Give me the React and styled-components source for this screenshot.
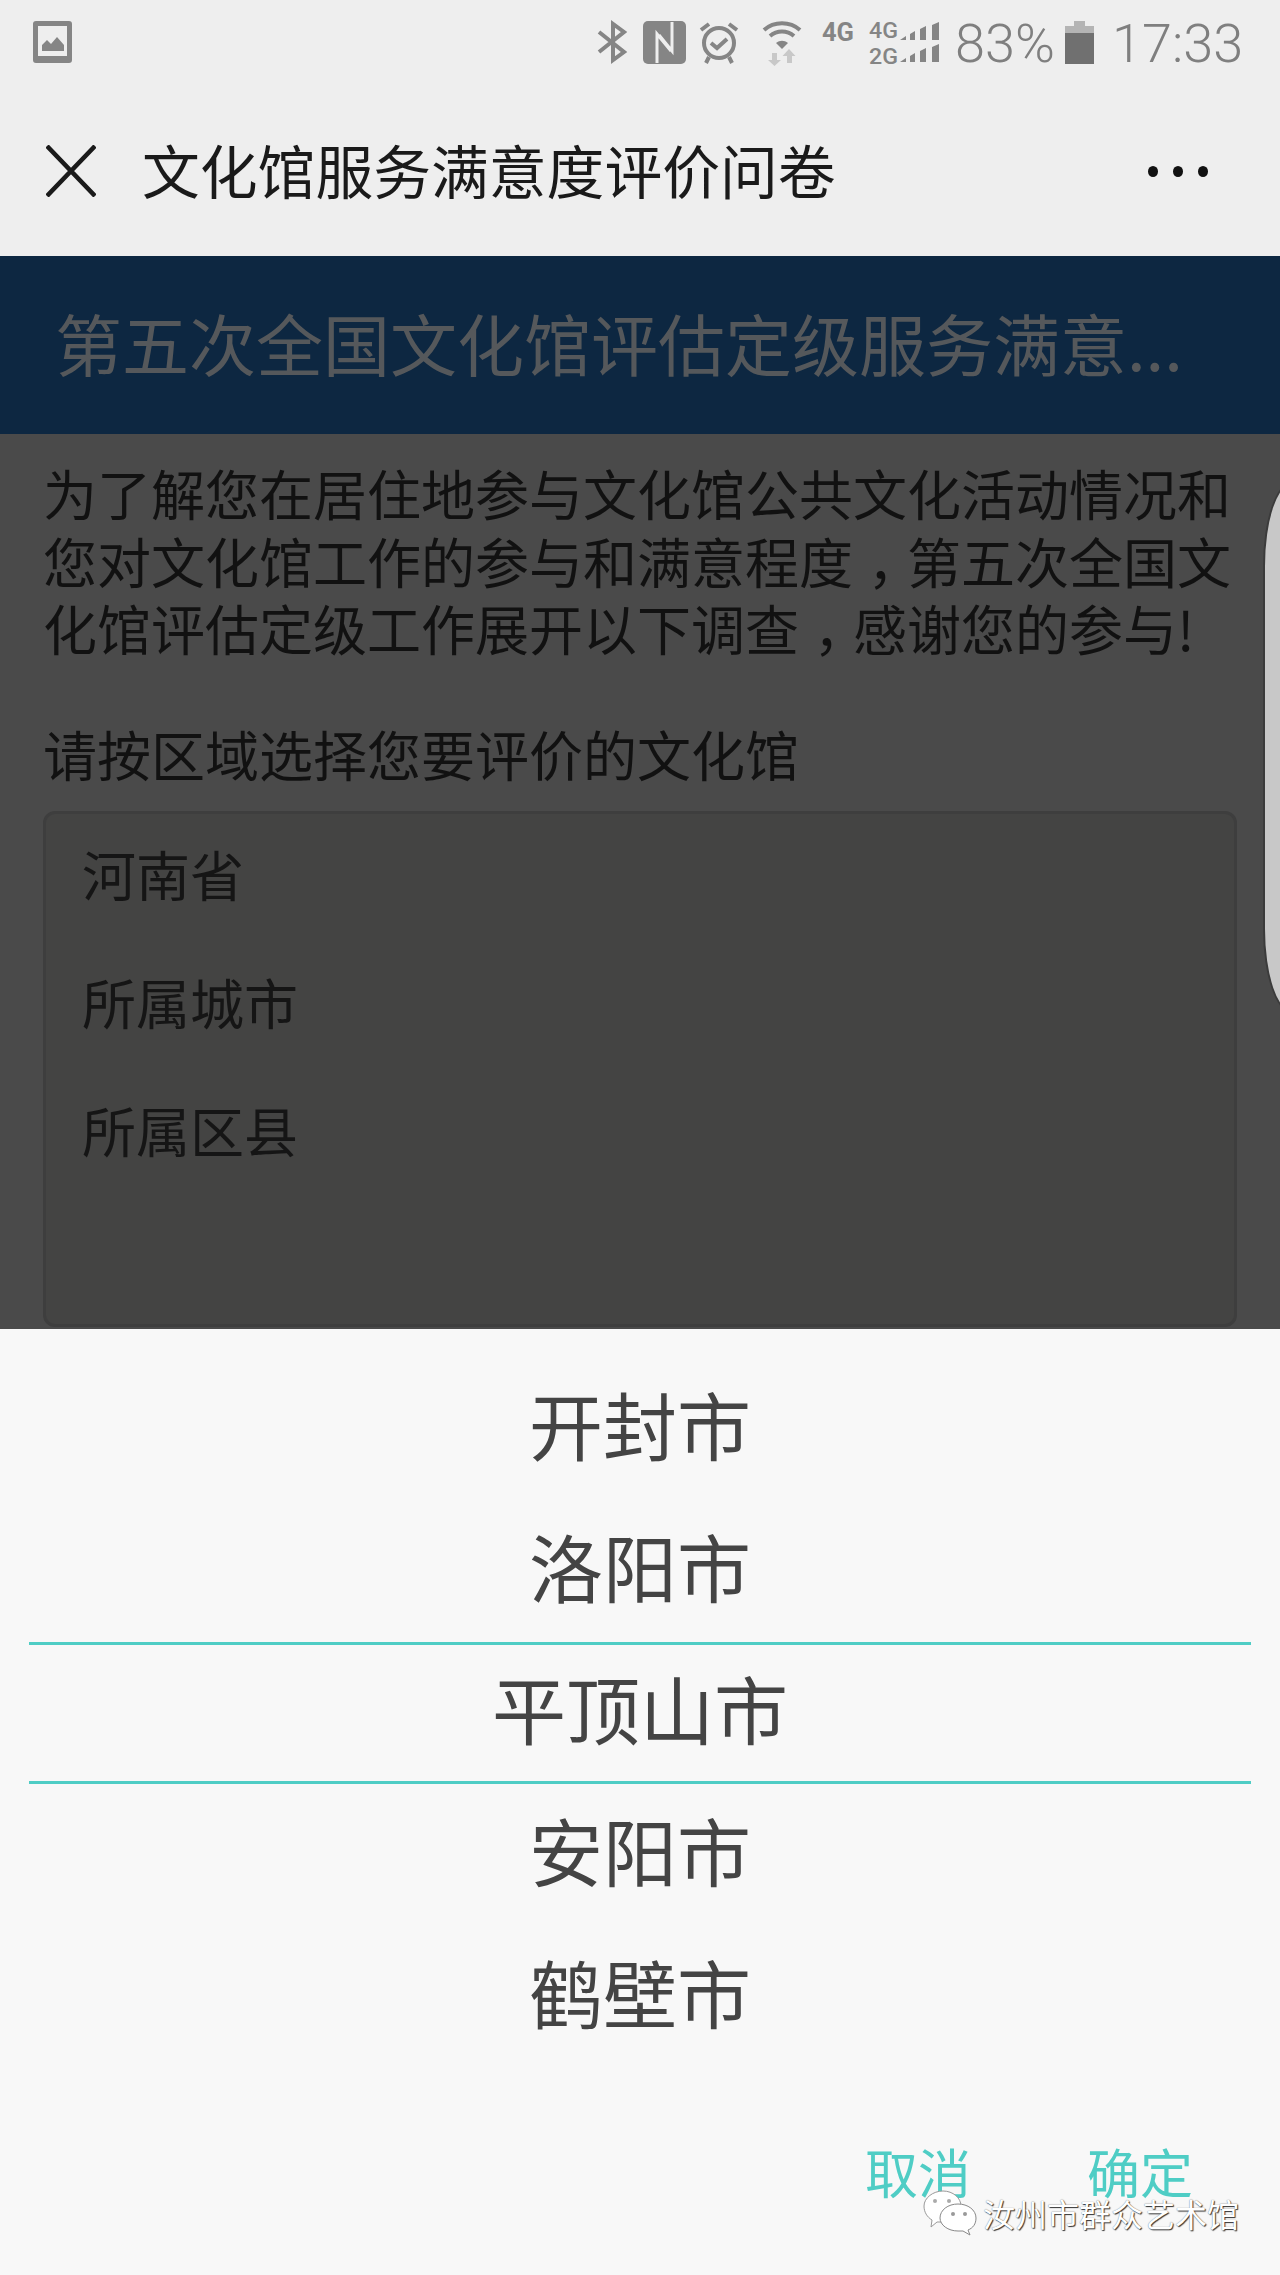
import React from 'react'
import styled, { createGlobalStyle } from 'styled-components'

const cjk = '"Noto Sans CJK SC", "Noto Sans", sans-serif'

const Global = createGlobalStyle`
  html, body { margin: 0; padding: 0; background: #f8f8f8; }
  * { box-sizing: border-box; }
`

const Page = styled.div`
  width: 1280px;
  height: 2275px;
  display: flex;
  flex-direction: column;
  overflow: hidden;
  font-family: ${cjk};
`

const Header = styled.div`
  height: 256px;
  background: #eeeeee;
  display: flex;
  flex-direction: column;
`

const StatusBar = styled.div`
  height: 86px;
  display: flex;
  align-items: flex-start;
  padding: 21px 37px 0 33px;
  color: #808080;
`

const StatusRight = styled.div`
  margin-left: auto;
  display: flex;
  align-items: flex-start;
`

const StatusIcon = styled.svg`
  display: block;
  flex: none;
  overflow: visible;
  margin-left: ${p => p.$gap || 0}px;
`

const StatusText = styled.span`
  margin-left: ${p => p.$gap}px;
  width: ${p => p.$width}px;
  padding-top: 1px;
  font-family: Roboto, sans-serif;
  font-weight: 300;
  font-size: 54px;
  line-height: 44px;
  white-space: nowrap;
  color: #7f7f7f;
`

const NavBar = styled.div`
  flex: 1;
  display: flex;
  align-items: center;
  padding: 0 72px 0 46px;
`

const NavTitle = styled.div`
  margin: 0 0 4px 46px;
  font-size: 57.8px;
  line-height: 64px;
  color: #1a1a1a;
  white-space: nowrap;
`

const Dots = styled.div`
  margin-left: auto;
  display: flex;
  gap: 15px;
`

const Dot = styled.i`
  width: 10px;
  height: 11px;
  border-radius: 50%;
  background: #111;
`

const Banner = styled.div`
  height: 178px;
  background: #0d2741;
  padding: 0 40px 6px 55px;
  display: flex;
  align-items: center;
`

const BannerTitle = styled.div`
  font-size: 67px;
  line-height: 88px;
  color: #55585b;
  white-space: nowrap;
`

const Content = styled.div`
  position: relative;
  height: 895px;
  background: #4a4a4a;
  padding: 25px 43px 0;
  overflow: hidden;
`

const Intro = styled.p`
  margin: 0;
  font-size: 54px;
  line-height: 67.5px;
  color: #111;
  width: 1192px;
`

// the reference font sets the full-width comma in the middle of its cell
const Comma = styled.span`
  padding-left: 0.27em;
  letter-spacing: -0.27em;
`

const FormLabel = styled.div`
  margin-top: 58px;
  font-size: 54px;
  line-height: 68px;
  color: #111;
`

const FormBox = styled.div`
  margin-top: 23px;
  height: 516px;
  background: #444443;
  border: 3px solid #3e3e3e;
  border-radius: 12px;
`

const FormRow = styled.div`
  height: 128px;
  padding: 0 0 9px 36px;
  display: flex;
  align-items: center;
  font-size: 54px;
  color: #151515;
`

const PeekCard = styled.div`
  position: absolute;
  top: 47px;
  left: 1263px;
  width: 80px;
  height: 533px;
  background: #c8c8c8;
  border: 2px solid #3b3b3b;
  border-radius: 30px / 85px;
`

const Sheet = styled.div`
  flex: 1;
  position: relative;
  background: #f8f8f8;
  display: flex;
  flex-direction: column;
`

const PickerList = styled.div`
  margin-top: 29px;
  display: flex;
  flex-direction: column;
`

const PickerItem = styled.div`
  margin: 0 29px;
  height: 142px;
  padding-bottom: 14px;
  display: flex;
  align-items: center;
  justify-content: center;
  font-size: 74px;
  color: #444;
  ${p => p.$active && 'border-top: 3px solid #4fcdc5; border-bottom: 3px solid #4fcdc5;'}
`

const Actions = styled.div`
  position: absolute;
  top: 810px;
  left: 865px;
  display: flex;
  gap: 116px;
`

const ActionButton = styled.div`
  font-size: 53px;
  line-height: 64px;
  color: #4fcdc5;
`

const Watermark = styled.div`
  position: absolute;
  top: 860px;
  left: 923px;
  display: flex;
  align-items: center;
  gap: 6px;
`

const WatermarkText = styled.span`
  font-size: 32px;
  line-height: 48px;
  color: #fff;
  white-space: nowrap;
  text-shadow: 1px 1px 1px #333, 0 0 1px #666;
`

const PictureIcon = () => (
  <StatusIcon width="39" height="42" viewBox="0 0 39 42">
    <path fill="#858585" fillRule="evenodd" d="M3 0h33a3 3 0 0 1 3 3v36a3 3 0 0 1-3 3H3a3 3 0 0 1-3-3V3a3 3 0 0 1 3-3zM5 5v30h29V5z" />
    <path fill="#858585" d="M9 30v-6l5-5 4 4 6-7 7 8v6z" />
  </StatusIcon>
)

const BluetoothIcon = ({ gap }) => (
  <StatusIcon $gap={gap} width="29" height="42" viewBox="0 0 29 42" fill="none" stroke="#858585" strokeWidth="4">
    <path d="M1 11l25 20-11 8V3l11 8L1 31" />
  </StatusIcon>
)

const NfcIcon = ({ gap }) => (
  <StatusIcon $gap={gap} width="43" height="43" viewBox="0 0 43 43">
    <rect width="43" height="43" rx="5" fill="#858585" />
    <path fill="none" stroke="#eeeeee" strokeWidth="3" d="M14 42V13l14 17M29 1v29L16 14" />
  </StatusIcon>
)

const AlarmIcon = ({ gap }) => (
  <StatusIcon $gap={gap} width="38" height="43" viewBox="0 0 38 43" fill="none" stroke="#858585" strokeWidth="4">
    <circle cx="19" cy="22" r="15" />
    <path d="M9 36l-3 6M29 36l3 6M1 9l8-6M37 9l-8-6M11 22l6 5 10-9" />
  </StatusIcon>
)

const WifiIcon = ({ gap }) => (
  <StatusIcon $gap={gap} width="38" height="45" viewBox="0 0 38 45" fill="none">
    <path stroke="#858585" strokeWidth="4" d="M1 9c10-9 26-9 36 0M7 15c7-6 17-6 24 0" />
    <path fill="#858585" d="M19 28l-6-6c4-3 8-3 12 0z" />
    <path fill="#c8c8c8" d="M9 32h5v7h4l-6.500 6L5 39h4zM26 28l6.500 7H29v7h-5v-7h-4.500z" />
  </StatusIcon>
)

const Sim4gIcon = ({ gap }) => (
  <StatusIcon $gap={gap} width="32" height="24" viewBox="0 0 32 24">
    <text x="0" y="20" fontFamily="Roboto, sans-serif" fontWeight="700" fontSize="25" fill="#858585" textLength="32" lengthAdjust="spacingAndGlyphs">4G</text>
  </StatusIcon>
)

const bars = base => (
  <path d={`M32 ${base}l6-4v4zM42 ${base}v-6l5-3v9zM52 ${base}v-11l6-3v14zM64 ${base}v-15l7-3v18z`} />
)

const SignalIcon = ({ gap }) => (
  <StatusIcon $gap={gap} width="71" height="45" viewBox="0 0 71 45" fill="#858585">
    <text x="1" y="17" fontFamily="Roboto, sans-serif" fontWeight="500" fontSize="22" textLength="29" lengthAdjust="spacingAndGlyphs">4G</text>
    <text x="1" y="43" fontFamily="Roboto, sans-serif" fontWeight="500" fontSize="22" textLength="29" lengthAdjust="spacingAndGlyphs">2G</text>
    {bars(19)}
    {bars(41)}
  </StatusIcon>
)

const BatteryIcon = ({ gap }) => (
  <StatusIcon $gap={gap} width="29" height="43" viewBox="0 0 29 43">
    <path fill="#b4b4b4" d="M9 0h11v5h9v7H0V5h9z" />
    <rect y="12" width="29" height="31" fill="#707070" />
  </StatusIcon>
)

const CloseIcon = () => (
  <svg width="50" height="52" viewBox="0 0 50 52" fill="none" stroke="#1a1a1a" strokeWidth="4.5" style={{ flex: 'none' }}>
    <path d="M1 1l48 50M49 1L1 51" />
  </svg>
)

const WechatIcon = () => (
  <svg width="54" height="46" viewBox="0 0 54 46" style={{ flex: 'none' }}>
    <path fill="#fff" stroke="#999" d="M20 1c10 0 18 7 18 15 0 9-8 16-18 16h-6l-6 5 1-7C4 27 1 22 1 16 1 8 10 1 20 1z" />
    <path fill="#fff" stroke="#888" d="M35 14c10 0 18 6 18 14 0 6-3 10-8 12l2 5-7-4h-5c-10 0-18-6-18-13 0-8 8-14 18-14z" />
    <circle cx="12" cy="11" r="2" fill="#aaa" />
    <circle cx="26" cy="11" r="2" fill="#aaa" />
    <circle cx="30" cy="24" r="2" fill="#999" />
    <circle cx="42" cy="24" r="2" fill="#999" />
  </svg>
)

const cities = ['开封市', '洛阳市', '平顶山市', '安阳市', '鹤壁市']

export default function App() {
  return (
    <Page>
      <Global />
      <Header>
        <StatusBar>
          <PictureIcon />
          <StatusRight>
            <BluetoothIcon />
            <NfcIcon gap={16} />
            <AlarmIcon gap={14} />
            <WifiIcon gap={25} />
            <Sim4gIcon gap={21} />
            <SignalIcon gap={14} />
            <StatusText $gap={16} $width={97}>83%</StatusText>
            <BatteryIcon gap={13} />
            <StatusText $gap={18} $width={131}>17:33</StatusText>
          </StatusRight>
        </StatusBar>
        <NavBar>
          <CloseIcon />
          <NavTitle>文化馆服务满意度评价问卷</NavTitle>
          <Dots>
            <Dot />
            <Dot />
            <Dot />
          </Dots>
        </NavBar>
      </Header>
      <Banner>
        <BannerTitle>第五次全国文化馆评估定级服务满意...</BannerTitle>
      </Banner>
      <Content>
        <Intro>
          为了解您在居住地参与文化馆公共文化活动情况和您对文化馆工作的参与和满意程度<Comma>，</Comma>第五次全国文化馆评估定级工作展开以下调查<Comma>，</Comma>感谢您的参与!
        </Intro>
        <FormLabel>请按区域选择您要评价的文化馆</FormLabel>
        <FormBox>
          <FormRow>河南省</FormRow>
          <FormRow>所属城市</FormRow>
          <FormRow>所属区县</FormRow>
        </FormBox>
        <PeekCard />
      </Content>
      <Sheet>
        <PickerList>
          {cities.map((city, i) => (
            <PickerItem key={city} $active={i === 2}>{city}</PickerItem>
          ))}
        </PickerList>
        <Actions>
          <ActionButton>取消</ActionButton>
          <ActionButton>确定</ActionButton>
        </Actions>
        <Watermark>
          <WechatIcon />
          <WatermarkText>汝州市群众艺术馆</WatermarkText>
        </Watermark>
      </Sheet>
    </Page>
  )
}
